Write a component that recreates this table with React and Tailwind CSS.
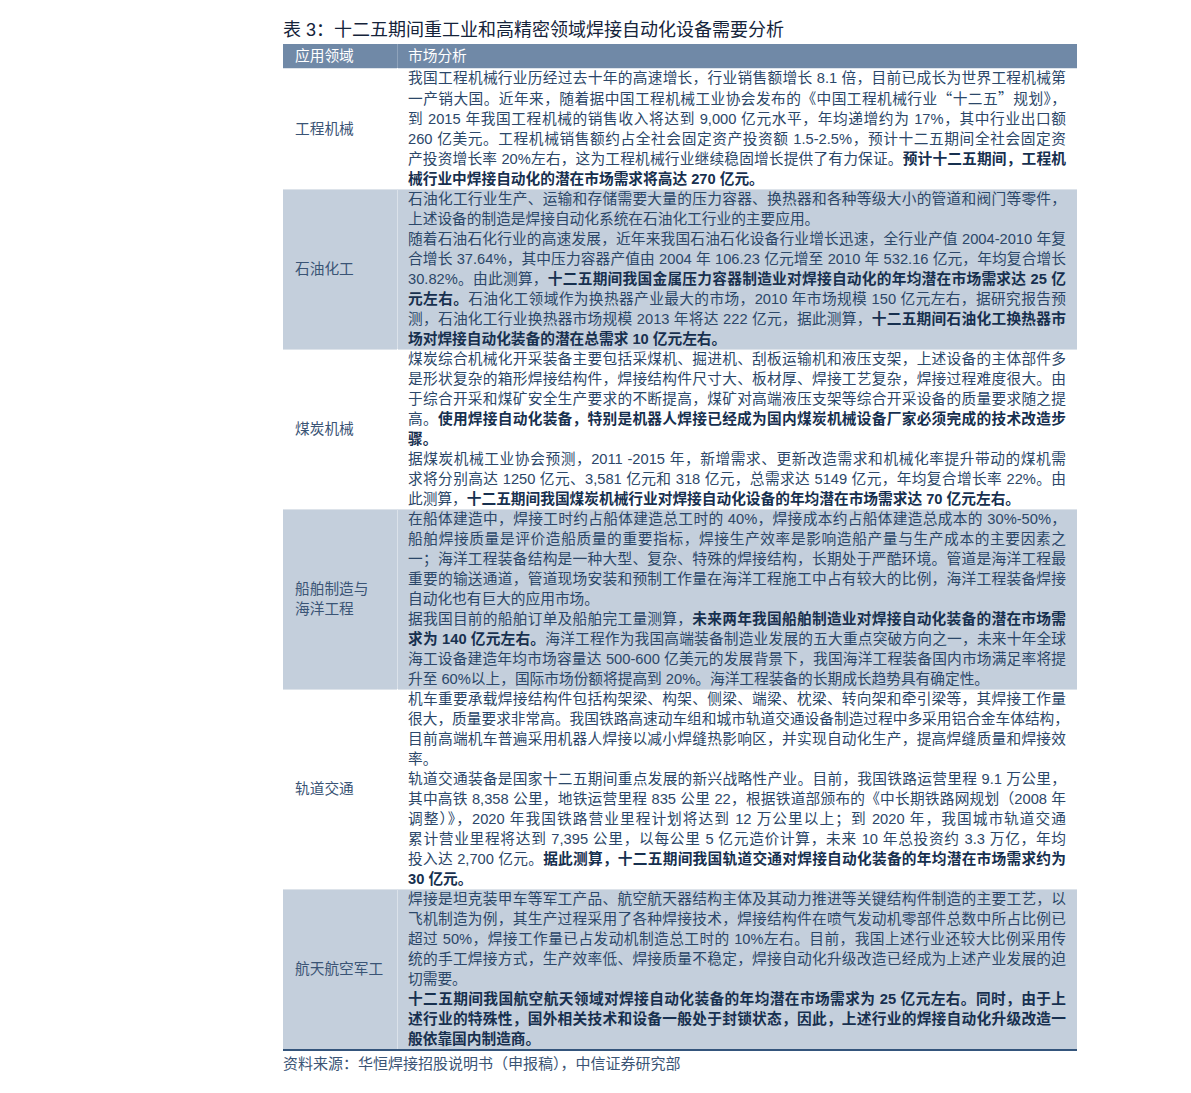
import React from "react";

const rows = [
  {
    label: ["工程机械"],
    shaded: false,
    paras: [
      [
        "我国工程机械行业历经过去十年的高速增长，行业销售额增长 8.1 倍，目前已成长为世界工程机械第",
        "一产销大国。近年来，随着据中国工程机械工业协会发布的《中国工程机械行业“十二五”规划》，",
        "到 2015 年我国工程机械的销售收入将达到 9,000 亿元水平，年均递增约为 17%，其中行业出口额",
        "260 亿美元。工程机械销售额约占全社会固定资产投资额 1.5-2.5%，预计十二五期间全社会固定资",
        "产投资增长率 20%左右，这为工程机械行业继续稳固增长提供了有力保证。**预计十二五期间，工程机**",
        "**械行业中焊接自动化的潜在市场需求将高达 270 亿元。**",
      ],
    ],
  },
  {
    label: ["石油化工"],
    shaded: true,
    paras: [
      [
        "石油化工行业生产、运输和存储需要大量的压力容器、换热器和各种等级大小的管道和阀门等零件，",
        "上述设备的制造是焊接自动化系统在石油化工行业的主要应用。",
      ],
      [
        "随着石油石化行业的高速发展，近年来我国石油石化设备行业增长迅速，全行业产值 2004-2010 年复",
        "合增长 37.64%，其中压力容器产值由 2004 年 106.23 亿元增至 2010 年 532.16 亿元，年均复合增长",
        "30.82%。由此测算，**十二五期间我国金属压力容器制造业对焊接自动化的年均潜在市场需求达 25 亿**",
        "**元左右。**石油化工领域作为换热器产业最大的市场，2010 年市场规模 150 亿元左右，据研究报告预",
        "测，石油化工行业换热器市场规模 2013 年将达 222 亿元，据此测算，**十二五期间石油化工换热器市**",
        "**场对焊接自动化装备的潜在总需求 10 亿元左右。**",
      ],
    ],
  },
  {
    label: ["煤炭机械"],
    shaded: false,
    paras: [
      [
        "煤炭综合机械化开采装备主要包括采煤机、掘进机、刮板运输机和液压支架，上述设备的主体部件多",
        "是形状复杂的箱形焊接结构件，焊接结构件尺寸大、板材厚、焊接工艺复杂，焊接过程难度很大。由",
        "于综合开采和煤矿安全生产要求的不断提高，煤矿对高端液压支架等综合开采设备的质量要求随之提",
        "高。**使用焊接自动化装备，特别是机器人焊接已经成为国内煤炭机械设备厂家必须完成的技术改造步**",
        "**骤。**",
      ],
      [
        "据煤炭机械工业协会预测，2011 -2015 年，新增需求、更新改造需求和机械化率提升带动的煤机需",
        "求将分别高达 1250 亿元、3,581 亿元和 318 亿元，总需求达 5149 亿元，年均复合增长率 22%。由",
        "此测算，**十二五期间我国煤炭机械行业对焊接自动化设备的年均潜在市场需求达 70 亿元左右。**",
      ],
    ],
  },
  {
    label: ["船舶制造与", "海洋工程"],
    shaded: true,
    paras: [
      [
        "在船体建造中，焊接工时约占船体建造总工时的 40%，焊接成本约占船体建造总成本的 30%-50%，",
        "船舶焊接质量是评价造船质量的重要指标，焊接生产效率是影响造船产量与生产成本的主要因素之",
        "一；海洋工程装备结构是一种大型、复杂、特殊的焊接结构，长期处于严酷环境。管道是海洋工程最",
        "重要的输送通道，管道现场安装和预制工作量在海洋工程施工中占有较大的比例，海洋工程装备焊接",
        "自动化也有巨大的应用市场。",
      ],
      [
        "据我国目前的船舶订单及船舶完工量测算，**未来两年我国船舶制造业对焊接自动化装备的潜在市场需**",
        "**求为 140 亿元左右。**海洋工程作为我国高端装备制造业发展的五大重点突破方向之一，未来十年全球",
        "海工设备建造年均市场容量达 500-600 亿美元的发展背景下，我国海洋工程装备国内市场满足率将提",
        "升至 60%以上，国际市场份额将提高到 20%。海洋工程装备的长期成长趋势具有确定性。",
      ],
    ],
  },
  {
    label: ["轨道交通"],
    shaded: false,
    paras: [
      [
        "机车重要承载焊接结构件包括构架梁、构架、侧梁、端梁、枕梁、转向架和牵引梁等，其焊接工作量",
        "很大，质量要求非常高。我国铁路高速动车组和城市轨道交通设备制造过程中多采用铝合金车体结构，",
        "目前高端机车普遍采用机器人焊接以减小焊缝热影响区，并实现自动化生产，提高焊缝质量和焊接效",
        "率。",
      ],
      [
        "轨道交通装备是国家十二五期间重点发展的新兴战略性产业。目前，我国铁路运营里程 9.1 万公里，",
        "其中高铁 8,358 公里，地铁运营里程 835 公里 22，根据铁道部颁布的《中长期铁路网规划（2008 年",
        "调整）》，2020 年我国铁路营业里程计划将达到 12 万公里以上；到 2020 年，我国城市轨道交通",
        "累计营业里程将达到 7,395 公里，以每公里 5 亿元造价计算，未来 10 年总投资约 3.3 万亿，年均",
        "投入达 2,700 亿元。**据此测算，十二五期间我国轨道交通对焊接自动化装备的年均潜在市场需求约为**",
        "**30 亿元。**",
      ],
    ],
  },
  {
    label: ["航天航空军工"],
    shaded: true,
    paras: [
      [
        "焊接是坦克装甲车等军工产品、航空航天器结构主体及其动力推进等关键结构件制造的主要工艺，以",
        "飞机制造为例，其生产过程采用了各种焊接技术，焊接结构件在喷气发动机零部件总数中所占比例已",
        "超过 50%，焊接工作量已占发动机制造总工时的 10%左右。目前，我国上述行业还较大比例采用传",
        "统的手工焊接方式，生产效率低、焊接质量不稳定，焊接自动化升级改造已经成为上述产业发展的迫",
        "切需要。",
      ],
      [
        "**十二五期间我国航空航天领域对焊接自动化装备的年均潜在市场需求为 25 亿元左右。同时，由于上**",
        "**述行业的特殊性，国外相关技术和设备一般处于封锁状态，因此，上述行业的焊接自动化升级改造一**",
        "**般依靠国内制造商。**",
      ],
    ],
  },
];

function Seg({ text }) {
  const bits = text.split(/([“”])/);
  return bits.map((b, i) =>
    b === "“" || b === "”" ? (
      <span key={i} className="font-['Noto_Sans_CJK_SC']">
        {b}
      </span>
    ) : (
      <React.Fragment key={i}>{b}</React.Fragment>
    )
  );
}

function Line({ text, last }) {
  const parts = text.split("**");
  return (
    <div
      className={
        "whitespace-nowrap " +
        (last ? "text-left" : "text-justify [text-align-last:justify]")
      }
    >
      {parts.map((p, i) =>
        p === "" ? null : i % 2 === 1 ? (
          <span key={i} className="font-bold text-[#17304f]">
            <Seg text={p} />
          </span>
        ) : (
          <span key={i}>
            <Seg text={p} />
          </span>
        )
      )}
    </div>
  );
}

export default function App() {
  return (
    <div
      className="min-h-[1093px] bg-white pl-[283px] pt-[17px]"
      style={{ fontFamily: '"Liberation Sans", "Noto Sans CJK SC", sans-serif' }}
    >
      <div className="w-[794px]">
        <div className="text-[18px] leading-[27px] text-[#15233a]">
          表 3：十二五期间重工业和高精密领域焊接自动化设备需要分析
        </div>
        <div className="flex h-[24px] bg-[#7089a7] text-[14.7px] leading-[24px] text-white">
          <div className="w-[115px] shrink-0 border-r border-[#8fa3bb] pl-[12px]">应用领域</div>
          <div className="flex-1 pl-[10px]">市场分析</div>
        </div>
        {rows.map((r, ri) => (
          <div
            key={ri}
            className={
              "flex shadow-[inset_0_1px_0_#dde3ea] " +
              (r.shaded ? "bg-[#c4cfdc]" : "bg-white")
            }
          >
            <div
              className={
                "flex w-[115px] shrink-0 flex-col justify-center border-r pl-[12px] text-[14.7px] leading-[20px] text-[#3a5475] " +
                (r.shaded ? "border-[#dbe2ea]" : "border-white")
              }
            >
              {r.label.map((l, i) => (
                <div key={i}>{l}</div>
              ))}
            </div>
            <div className="min-w-0 flex-1 pl-[10px] pr-[11px] text-[14.7px] leading-[20px] text-[#2b4769]">
              {r.paras.map((para, pi) =>
                para.map((line, li) => (
                  <Line key={pi + "-" + li} text={line} last={li === para.length - 1} />
                ))
              )}
            </div>
          </div>
        ))}
        <div className="h-[2px] bg-[#34557c]" />
        <div className="mt-[3px] text-[15px] leading-[20px] text-[#3a5475]">
          资料来源：华恒焊接招股说明书（申报稿），中信证券研究部
        </div>
      </div>
    </div>
  );
}
